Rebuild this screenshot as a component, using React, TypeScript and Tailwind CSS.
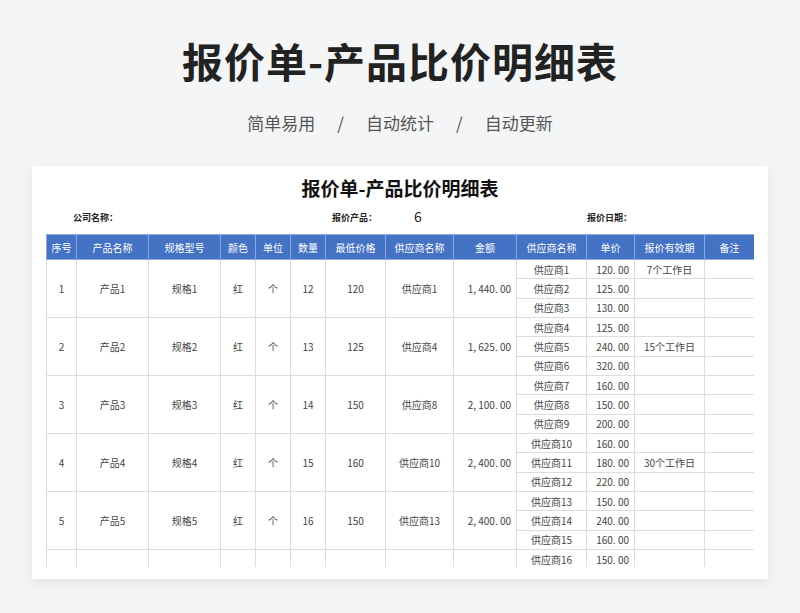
const F = { fontFamily: '"Noto Sans CJK SC", "Noto Sans", sans-serif' };
const widths = [30, 72, 72, 35, 35, 35, 60, 68, 63, 70, 48, 70, 50];
const heads = ["序号","产品名称","规格型号","颜色","单位","数量","最低价格","供应商名称","金额","供应商名称","单价","报价有效期","备注"];
const groups = [
  { n: 1, qty: 12, min: 120, sup: "供应商1", amt: "1, 440. 00", subs: [["供应商1","120. 00","7个工作日"],["供应商2","125. 00",""],["供应商3","130. 00",""]] },
  { n: 2, qty: 13, min: 125, sup: "供应商4", amt: "1, 625. 00", subs: [["供应商4","125. 00",""],["供应商5","240. 00","15个工作日"],["供应商6","320. 00",""]] },
  { n: 3, qty: 14, min: 150, sup: "供应商8", amt: "2, 100. 00", subs: [["供应商7","160. 00",""],["供应商8","150. 00",""],["供应商9","200. 00",""]] },
  { n: 4, qty: 15, min: 160, sup: "供应商10", amt: "2, 400. 00", subs: [["供应商10","160. 00",""],["供应商11","180. 00","30个工作日"],["供应商12","220. 00",""]] },
  { n: 5, qty: 16, min: 150, sup: "供应商13", amt: "2, 400. 00", subs: [["供应商13","150. 00",""],["供应商14","240. 00",""],["供应商15","160. 00",""]] },
  { n: 0, qty: 0, min: 0, sup: "", amt: "", subs: [["供应商16","150. 00",""],["","",""],["","",""]] },
];
const td = "border border-[#dcdcdc] text-center text-[10px] text-[#444] h-[19.33px] p-0 whitespace-nowrap";
export default function App() {
  return (
    <div className="w-[800px] h-[613px] bg-[#f3f5f7] flex flex-col items-center overflow-hidden" style={F}>
      <h1 className="mt-[33px] text-[41px] leading-[54px] font-bold text-[#222] tracking-[1px]">报价单-产品比价明细表</h1>
      <div className="mt-[24px] text-[17px] leading-[24px] text-[#555] flex gap-[22px]">
        <span>简单易用</span><span>/</span><span>自动统计</span><span>/</span><span>自动更新</span>
      </div>
      <div className="mt-[31px] w-[736px] h-[413px] bg-white shadow-[0_4px_12px_rgba(0,0,0,0.08)] px-[14px] pt-[8px]">
        <div className="text-center text-[19px] font-semibold leading-[28px] text-[#111]">报价单-产品比价明细表</div>
        <div className="relative h-[32px] text-[9px] font-bold text-[#222]">
          <span className="absolute left-[27px] top-[9px]">公司名称：</span>
          <span className="absolute left-[286px] top-[9px]">报价产品：</span>
          <span className="absolute left-[368px] top-[4px] text-[14px] font-normal">6</span>
          <span className="absolute left-[541px] top-[9px]">报价日期：</span>
        </div>
        <div className="h-[333px] overflow-hidden">
          <table className="border-collapse table-fixed w-[708px]">
            <colgroup>{widths.map((w, i) => <col key={i} style={{ width: w }} />)}</colgroup>
            <thead>
              <tr>{heads.map((h, i) => <th key={i} className="bg-[#4472c4] text-white font-normal text-[10px] h-[25px] border border-[#8eaadb]">{h}</th>)}</tr>
            </thead>
            <tbody>
              {groups.flatMap((g) => g.subs.map((s, j) => (
                <tr key={g.n + "-" + j}>
                  {j === 0 && (g.n ? [String(g.n), "产品" + g.n, "规格" + g.n, "红", "个", String(g.qty), String(g.min), g.sup] : ["","","","","","","",""]).map((v, k) => (
                    <td key={k} rowSpan={3} className={td}>{v}</td>
                  ))}
                  {j === 0 && <td rowSpan={3} className={td + " text-right pr-[5px]"}>{g.amt}</td>}
                  <td className={td}>{s[0]}</td>
                  <td className={td + " text-right pr-[5px]"}>{s[1]}</td>
                  <td className={td}>{s[2]}</td>
                  <td className={td}></td>
                </tr>
              )))}
            </tbody>
          </table>
        </div>
      </div>
    </div>
  );
}
